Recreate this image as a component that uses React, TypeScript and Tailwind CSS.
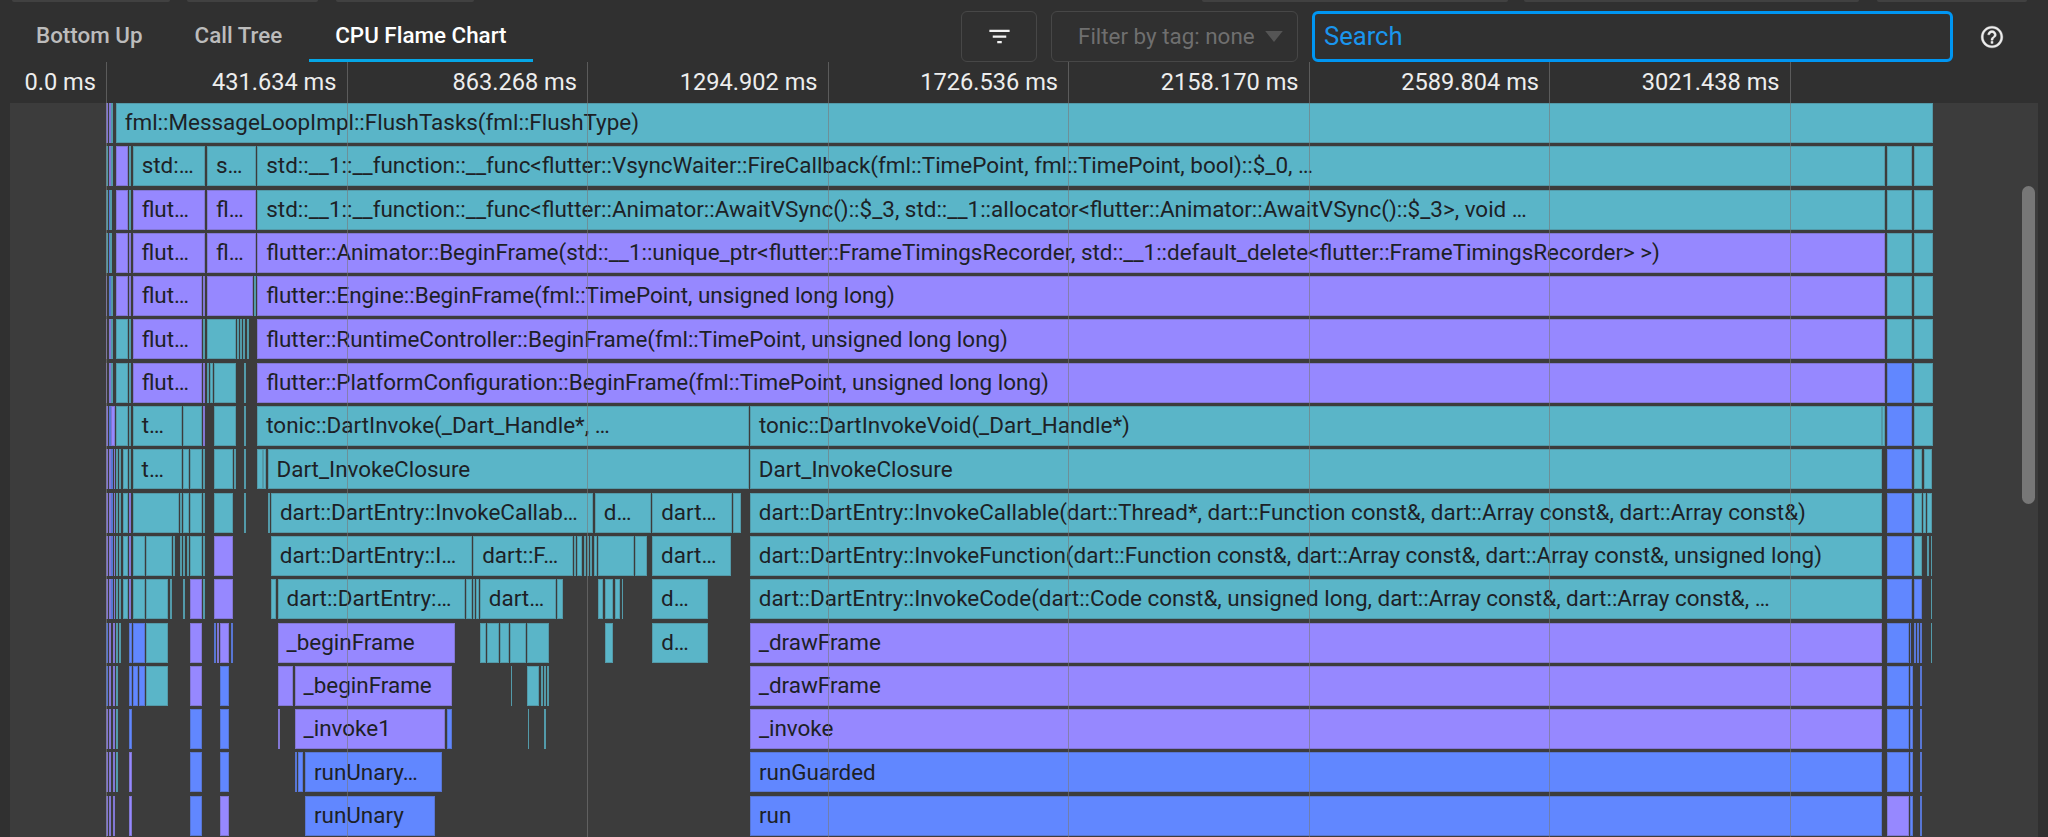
import React from "react";

type Color = "T" | "P" | "B";
type Seg = [number, number, Color, string?];

const L = (a: number, b: number, c: Color, t?: string): Seg => [100 + a / 3, 100 + b / 3, c, t];
const M = (a: number, b: number, c: Color, t?: string): Seg => [400 + a / 3, 400 + b / 3, c, t];
const R = (a: number, b: number, c: Color, t?: string): Seg => [1840 + a / 3, 1840 + b / 3, c, t];

const bg: Record<Color, string> = {
  T: "bg-[#5ab5c8]",
  P: "bg-[#9688ff]",
  B: "bg-[#6187ff]",
};

const stripA: Seg[] = [L(18, 24, "P"), L(26, 32, "P"), L(34, 40, "B"), L(41, 45, "P")];
const stripB: Seg[] = [L(48, 55, "T"), L(58, 63, "T"), L(68, 84, "T")];

const rows: Seg[][] = [
  [L(18, 24, "P"), L(26, 33, "P"), L(34, 38, "T"), [115.7, 1932.7, "T", "fml::MessageLoopImpl::FlushTasks(fml::FlushType)"]],
  [
    L(18, 24, "T"), L(27, 33, "P"), L(34, 38, "T"), L(47, 84, "P"), L(87, 94, "T"),
    L(98, 316, "T", "std:…"), L(321, 468, "T", "s…"),
    [257.3, 1885, "T", "std::__1::__function::__func<flutter::VsyncWaiter::FireCallback(fml::TimePoint, fml::TimePoint, bool)::$_0, …"],
    R(141, 217, "T"), R(222, 278, "T"),
  ],
  [
    L(18, 24, "T"), L(27, 30, "B"), L(31, 36, "T"), L(47, 84, "P"), L(87, 94, "T"),
    L(98, 316, "P", "flut…"), L(321, 468, "P", "fl…"),
    [257.3, 1885, "T", "std::__1::__function::__func<flutter::Animator::AwaitVSync()::$_3, std::__1::allocator<flutter::Animator::AwaitVSync()::$_3>, void …"],
    R(141, 217, "T"), R(222, 278, "T"),
  ],
  [
    L(18, 24, "T"), L(26, 30, "B"), L(31, 36, "T"), L(47, 84, "P"), L(87, 94, "P"),
    L(98, 316, "P", "flut…"), L(321, 468, "P", "fl…"),
    [257.3, 1885, "P", "flutter::Animator::BeginFrame(std::__1::unique_ptr<flutter::FrameTimingsRecorder, std::__1::default_delete<flutter::FrameTimingsRecorder> >)"],
    R(141, 217, "T"), R(222, 278, "T"),
  ],
  [
    L(18, 22, "P"), L(26, 32, "B"), L(33, 38, "T"), L(47, 84, "P"), L(87, 94, "P"),
    L(98, 306, "P", "flut…"), L(309, 314, "P"), L(321, 458, "P"), L(462, 468, "T"),
    [257.3, 1885, "P", "flutter::Engine::BeginFrame(fml::TimePoint, unsigned long long)"],
    R(141, 217, "T"), R(222, 278, "T"),
  ],
  [
    L(18, 22, "P"), L(26, 32, "P"), L(33, 38, "T"), L(47, 84, "T"), L(87, 94, "T"),
    L(98, 306, "P", "flut…"), L(309, 314, "T"), L(321, 408, "T"), L(411, 416, "T"), L(419, 426, "T"), L(429, 434, "T"), L(440, 448, "T"),
    [257.3, 1885, "P", "flutter::RuntimeController::BeginFrame(fml::TimePoint, unsigned long long)"],
    R(141, 217, "T"), R(222, 278, "T"),
  ],
  [
    L(18, 22, "P"), L(26, 32, "P"), L(33, 38, "T"), L(47, 84, "T"), L(87, 94, "T"),
    L(98, 306, "P", "flut…"), L(309, 316, "P"), L(321, 328, "T"), L(330, 338, "T"), L(341, 408, "T"), L(431, 438, "T"),
    [257.3, 1885, "P", "flutter::PlatformConfiguration::BeginFrame(fml::TimePoint, unsigned long long)"],
    R(141, 217, "B"), R(222, 278, "T"),
  ],
  [
    L(18, 24, "P"), L(26, 32, "B"), L(34, 44, "P"), L(47, 84, "T"), L(87, 94, "T"),
    L(98, 246, "T", "t…"), L(250, 306, "T"), L(310, 316, "P"), L(341, 408, "T"), L(431, 438, "T"),
    L(472, 1947, "T", "tonic::DartInvoke(_Dart_Handle*, …"),
    [750, 1882, "T", "tonic::DartInvokeVoid(_Dart_Handle*)"],
    R(127, 135, "T"), R(141, 217, "B"), R(222, 278, "T"),
  ],
  [
    ...stripA, ...stripB, L(87, 94, "T"),
    L(98, 246, "T", "t…"), L(250, 266, "T"), L(270, 306, "T"), L(310, 316, "T"), L(341, 398, "T"), L(402, 408, "T"), L(431, 438, "T"),
    L(472, 488, "T"), L(490, 497, "T"), L(503, 1947, "T", "Dart_InvokeClosure"),
    [750, 1882, "T", "Dart_InvokeClosure"],
    R(141, 217, "B"), R(222, 247, "T"), R(253, 278, "T"),
  ],
  [
    ...stripA, ...stripB, L(87, 94, "P"),
    L(98, 236, "T"), L(239, 246, "T"), L(250, 266, "T"), L(270, 306, "T"), L(310, 316, "T"), L(341, 398, "T"), L(432, 438, "T"),
    L(503, 510, "T"), [271, 593.3, "T", "dart::DartEntry::InvokeCallab…"],
    M(585, 752, "T", "d…"), M(757, 995, "T", "dart…"), M(1000, 1025, "T"),
    [750, 1882, "T", "dart::DartEntry::InvokeCallable(dart::Thread*, dart::Function const&, dart::Array const&, dart::Array const&)"],
    R(141, 217, "B"), R(222, 247, "T"), R(251, 258, "T"), R(263, 278, "T"),
  ],
  [
    ...stripA, ...stripB, L(87, 94, "P"),
    L(98, 134, "T"), L(138, 215, "T"), L(219, 226, "T"), L(240, 246, "T"), L(250, 256, "T"), L(261, 266, "T"), L(270, 306, "T"), L(310, 316, "T"), L(341, 398, "P"),
    [271, 471.7, "T", "dart::DartEntry::I…"],
    M(220, 520, "T", "dart::F…"), M(522, 530, "T"), M(533, 548, "T"), M(552, 558, "T"), M(562, 568, "T"), M(572, 578, "T"), M(582, 592, "T"), M(595, 702, "T"), M(706, 742, "T"), M(757, 995, "T", "dart…"),
    [750, 1882, "T", "dart::DartEntry::InvokeFunction(dart::Function const&, dart::Array const&, dart::Array const&, unsigned long)"],
    R(141, 217, "B"), R(222, 247, "T"), R(262, 267, "T"), R(273, 278, "T"),
  ],
  [
    ...stripA, ...stripB, L(87, 94, "P"),
    L(98, 134, "T"), L(138, 205, "T"), L(209, 215, "T"), L(250, 255, "T"), L(270, 306, "P"), L(310, 316, "T"), L(341, 398, "P"),
    L(513, 528, "T"), [277.7, 465, "T", "dart::DartEntry:…"],
    M(198, 215, "T"), M(218, 225, "T"), M(228, 236, "T"), M(240, 468, "T", "dart…"), M(473, 489, "T"),
    M(595, 610, "T"), M(615, 640, "T"), M(645, 662, "T"), M(666, 671, "T"), M(757, 924, "T", "d…"),
    [750, 1882, "T", "dart::DartEntry::InvokeCode(dart::Code const&, unsigned long, dart::Array const&, dart::Array const&, …"],
    R(141, 217, "B"), R(222, 247, "B"), R(273, 278, "T"),
  ],
  [
    L(18, 24, "B"), L(27, 34, "P"), L(38, 44, "P"), L(48, 55, "T"), L(58, 63, "T"),
    L(88, 95, "B"), L(98, 134, "B"), L(138, 205, "T"), L(270, 306, "P"),
    L(341, 347, "B"), L(350, 358, "P"), L(361, 387, "P"), L(392, 398, "B"),
    [277.7, 455, "P", "_beginFrame"],
    M(240, 257, "T"), M(261, 298, "T"), M(301, 327, "T"), M(331, 378, "T"), M(382, 448, "T"), M(615, 640, "T"), M(757, 924, "T", "d…"),
    [750, 1882, "P", "_drawFrame"],
    R(141, 207, "B"), R(210, 215, "B"), R(222, 228, "B"), R(232, 238, "B"), R(241, 247, "B"), R(273, 278, "T"),
  ],
  [
    L(18, 24, "B"), L(27, 34, "P"), L(38, 44, "P"), L(48, 53, "T"),
    L(88, 95, "B"), L(98, 114, "B"), L(118, 134, "B"), L(138, 205, "T"), L(270, 306, "P"), L(361, 387, "B"),
    L(533, 580, "P"), [294.7, 451.7, "P", "_beginFrame"],
    M(333, 337, "T"), M(382, 418, "T"), M(422, 428, "T"), M(432, 438, "T"), M(442, 448, "T"),
    [750, 1882, "P", "_drawFrame"],
    R(141, 207, "B"), R(211, 218, "B"), R(241, 247, "B"),
  ],
  [
    L(18, 24, "P"), L(27, 34, "P"), L(38, 44, "P"), L(48, 53, "T"),
    L(88, 95, "B"), L(270, 306, "B"), L(361, 387, "B"),
    L(533, 540, "P"), [294.7, 445, "P", "_invoke1"], M(140, 155, "B"),
    M(383, 387, "T"), M(433, 437, "T"),
    [750, 1882, "P", "_invoke"],
    R(141, 207, "B"), R(211, 218, "B"), R(241, 247, "B"),
  ],
  [
    L(18, 24, "P"), L(27, 34, "P"), L(38, 44, "P"), L(48, 53, "T"),
    L(88, 95, "P"), L(270, 306, "B"), L(361, 387, "B"),
    L(585, 592, "B"), L(595, 608, "B"), L(615, 1025, "B", "runUnary…"),
    [750, 1882, "B", "runGuarded"],
    R(141, 207, "B"), R(211, 218, "B"), R(241, 247, "B"),
  ],
  [
    L(18, 24, "P"), L(27, 34, "P"), L(38, 44, "P"),
    L(88, 95, "P"), L(270, 306, "B"), L(361, 387, "P"),
    L(615, 1004, "B", "runUnary"),
    [750, 1882, "B", "run"],
    R(141, 207, "P"), R(211, 218, "B"), R(241, 247, "B"),
  ],
];

const ticks = ["431.634 ms", "863.268 ms", "1294.902 ms", "1726.536 ms", "2158.170 ms", "2589.804 ms", "3021.438 ms"];
const lines = [106, 346.6, 587, 827.6, 1068, 1308.5, 1549, 1789.5];

function Row({ segs }: { segs: Seg[] }) {
  let prev = 0;
  return (
    <div className="flex h-10 flex-none">
      {segs.map((s, i) => {
        const [a, b, c, t] = s;
        const ml = a - prev;
        prev = b;
        return (
          <div
            key={i}
            className={`flex flex-none items-center overflow-hidden whitespace-nowrap ${bg[c]} ${t ? "pl-[9px]" : ""} text-[22.45px] text-[#1d2126] shadow-[inset_0_0_0_1px_rgba(60,60,60,0.22)]`}
            style={{ marginLeft: ml, width: b - a }}
          >
            {t}
          </div>
        );
      })}
    </div>
  );
}

function Tab({ label, active }: { label: string; active?: boolean }) {
  return (
    <div
      className={`flex h-[52px] items-center whitespace-nowrap px-[26px] text-[22.4px] font-medium ${
        active ? "ml-px border-b-[3px] border-[#05a6e6] pt-[3px] text-white" : "text-[#bcbcbc]"
      }`}
    >
      {label}
    </div>
  );
}

export default function App() {
  return (
    <div className="relative flex h-[837px] w-[2048px] flex-col overflow-hidden bg-[#303030] font-['Roboto',sans-serif]">
      <div className="flex h-[2px] flex-none">
        <div className="ml-3 w-[158px] rounded-b bg-[#414141]" />
        <div className="ml-[17px] w-[131px] rounded-b bg-[#414141]" />
        <div className="ml-[18px] w-[138px] rounded-b bg-[#414141]" />
        <div className="ml-[728px] w-[306px] rounded-b bg-[#414141]" />
        <div className="ml-4 w-[335px] rounded-b bg-[#414141]" />
        <div className="ml-[18px] w-[150px] rounded-b bg-[#414141]" />
      </div>

      <div className="flex h-[60px] flex-none items-end">
        <div className="ml-[10px] flex w-[524px] flex-none">
          <Tab label="Bottom Up" />
          <Tab label="Call Tree" />
          <Tab label="CPU Flame Chart" active />
        </div>
        <div className="ml-[427px] flex h-[51px] flex-none gap-[14px]">
          <div className="flex w-[76px] items-center justify-center rounded-[6px] border border-[#474747]">
            <svg viewBox="0 0 24 24" width="27" height="27" fill="#f2f2f2">
              <path d="M10 18h4v-2h-4v2zM3 6v2h18V6H3zm3 7h12v-2H6v2z" />
            </svg>
          </div>
          <div className="flex w-[247px] items-center justify-between whitespace-nowrap rounded-[6px] border border-[#474747] pl-[26px] pr-[14px] text-[22.4px] text-[#6f6f6f]">
            <span>Filter by tag: none</span>
            <svg viewBox="0 0 16 10" width="18" height="11" fill="#555555">
              <path d="M0 0h16L8 10z" />
            </svg>
          </div>
          <div className="flex w-[641px] items-center rounded-[6px] border-[3px] border-[#0096f2] pl-[9px] text-[25.6px] text-[#1a96ee]">
            Search
          </div>
          <div className="ml-3 flex w-[52px] items-center">
            <svg viewBox="0 0 24 24" width="26" height="26" fill="#ececec" stroke="#ececec" strokeWidth="0.3">
              <path d="M11 18h2v-2h-2v2zm1-16C6.48 2 2 6.48 2 12s4.48 10 10 10 10-4.48 10-10S17.52 2 12 2zm0 18c-4.41 0-8-3.59-8-8s3.59-8 8-8 8 3.59 8 8-3.59 8-8 8zm0-14c-2.21 0-4 1.79-4 4h2c0-1.1.9-2 2-2s2 .9 2 2c0 2-3 1.75-3 5h2c0-2.25 3-2.5 3-5 0-2.21-1.79-4-4-4z" />
            </svg>
          </div>
        </div>
      </div>

      <div className="flex h-[41px] flex-none items-center whitespace-nowrap text-[23.6px] text-[#ededed]">
        <div className="w-[106px] flex-none pr-[10px] text-right">0.0 ms</div>
        {ticks.map((t) => (
          <div key={t} className="w-[240.5px] flex-none pr-[10px] text-right">
            {t}
          </div>
        ))}
      </div>

      <div className="relative mx-[10px] flex-1 overflow-hidden bg-[#3c3c3c]">
        <div className="-ml-[10px] flex flex-col gap-[3.3px]">
          {rows.map((r, i) => (
            <Row key={i} segs={r} />
          ))}
        </div>
        <div className="absolute right-[3px] top-[83px] h-[318px] w-[13px] rounded-full bg-[#777777]" />
      </div>

      {lines.map((x) => (
        <div key={x} className="absolute bottom-0 top-[62px] w-px bg-[#787878]/60" style={{ left: x }} />
      ))}
    </div>
  );
}
